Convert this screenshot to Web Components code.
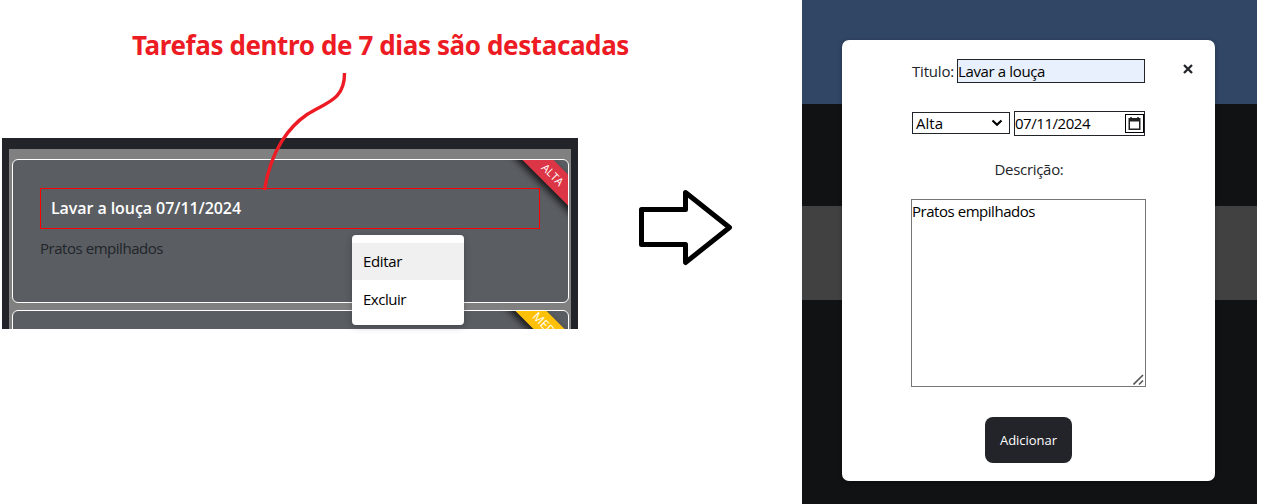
<!DOCTYPE html>
<html lang="pt-BR">
<head>
<meta charset="utf-8">
<title>Tarefas</title>
<style>
body{margin:0;background:#fff;font-family:"Open Sans","Noto Sans",sans-serif;font-size:15px;font-weight:400;line-height:20px;color:#212529}
</style>
</head>
<body>
<task-guide></task-guide>
<script>
function define(name, html, setup){
  const t=document.createElement('template');
  t.innerHTML=html;
  customElements.define(name,class extends HTMLElement{
    connectedCallback(){
      if(this.shadowRoot)return;
      this.attachShadow({mode:'open'}).append(t.content.cloneNode(true));
      if(setup)setup(this);
    }
  });
}

/* A single line of text tracked to a given width */
define('fit-text',`<style>
:host{display:inline-block;white-space:nowrap}
span{display:inline-block}
</style><span><slot></slot></span>`,el=>{
  const s=el.shadowRoot.querySelector('span');
  const w=+el.getAttribute('width'), n=el.textContent.length;
  s.style.letterSpacing=((w-s.getBoundingClientRect().width)/n)+'px';
  el.style.width=w+'px';
});

define('task-ribbon',`<style>
:host{position:absolute;top:3px;right:-64px;width:160px;height:22px;transform:rotate(45deg);background:var(--ribbon);color:#fff;box-shadow:0 4px 7px rgba(0,0,0,.75);font-size:11px;line-height:21px;text-align:center}
</style><slot></slot>`);

define('task-card',`<style>
:host{display:block;position:relative;box-sizing:border-box;height:144px;border:1px solid #fff;border-radius:6px;background:#5a5d62;overflow:hidden;padding:28px 28px 0 27px}
</style><slot></slot><slot name="ribbon"></slot>`);

define('task-heading',`<style>
:host{display:block;box-sizing:border-box;height:41px;border:1px solid #f00;padding:9px 10px;color:#fff;font-weight:600;font-size:16px}
</style><slot></slot>`);

define('context-menu',`<style>
:host{display:block;position:absolute;left:350px;top:97px;box-sizing:border-box;width:112px;height:90px;padding:8px 0;border-radius:4px;background:#fff;color:#000;box-shadow:0 2px 7px rgba(0,0,0,.25)}
div{height:37px;line-height:37px;padding-left:11px}
.on{background:#f0f0f0}
div+div{padding-top:1px}
</style><div class="on"><fit-text width="39">Editar</fit-text></div><div><fit-text width="43">Excluir</fit-text></div>`);

define('task-board',`<style>
:host{display:block;position:relative;margin-left:2px;width:576px;height:191px;box-sizing:border-box;background:#232429;padding:11px 7px 0}
.list{box-sizing:border-box;height:180px;background:#808080;padding:10px 2px 0 3px;display:flex;flex-direction:column;gap:7px;overflow:hidden}
task-card{flex:none}
p{margin:9px 0 0}
.media{top:7px;right:-61px}
</style>
<div class="list">
<task-card><task-heading><fit-text width="190">Lavar a louça 07/11/2024</fit-text></task-heading>
<p><fit-text width="123">Pratos empilhados</fit-text></p>
<task-ribbon slot="ribbon" style="--ribbon:#dc3545;text-indent:2px">ALTA</task-ribbon></task-card>
<task-card><task-ribbon slot="ribbon" class="media" style="--ribbon:#ffc107;font-size:12px;text-indent:-4px">MEDIA</task-ribbon></task-card>
</div><context-menu></context-menu>`);

define('callout-line',`<style>:host{display:block;position:absolute;left:250px;top:68px}svg{display:block}</style>
<svg width="110" height="130" viewBox="250 68 110 130" fill="none" stroke="#ed1c24" stroke-width="3.400"><path d="M344.500 73C345 101 324 103 307 114.500S271 149 264.500 190"/></svg>`);

define('flow-arrow',`<style>:host{display:block;margin:185px 0 0 57px;width:100px}svg{display:block}</style>
<svg width="100" height="84" viewBox="635 185 100 84" fill="none" stroke="#000" stroke-width="5" stroke-linejoin="round"><path d="M641.500 209.500H685.500V192.500L729.500 227.500L685.500 262.500V244.500H641.500Z"/></svg>`);

define('date-field',`<style>
:host{display:flex;box-sizing:border-box;width:131px;height:25px;border:1px solid #212529;justify-content:space-between;align-items:center;color:#000}
fit-text{margin-top:-1px}
i{box-sizing:border-box;width:19px;height:19px;border:1px solid #000;display:flex;align-items:center;justify-content:center}
</style><fit-text width="75">07/11/2024</fit-text><i><svg width="13" height="13" viewBox="0 0 13 13"><path d="M.5 1H12.500V13H.5ZM2 4.500V11.600H11V4.500Z" fill="#222" fill-rule="evenodd"/><path d="M3 0V2M10 0V2" stroke="#222" stroke-width="1.500"/></svg></i>`);

define('select-field',`<style>
:host{display:flex;box-sizing:border-box;width:98px;height:22px;border:1px solid #212529;justify-content:space-between;align-items:center;padding:0 6px 0 3px;color:#000}
</style><fit-text width="27">Alta</fit-text><svg width="12" height="8" viewBox="0 0 12 8"><path d="M1.500 1.500L6 5.700L10.500 1.500" fill="none" stroke="#000" stroke-width="2.200"/></svg>`);

define('text-area',`<style>
:host{display:block;position:relative;box-sizing:border-box;width:235px;height:188px;border:1px solid #767676;color:#000;padding-top:1px}
svg{position:absolute;right:1px;bottom:1px}
</style><fit-text width="123">Pratos empilhados</fit-text><svg width="11" height="11" viewBox="0 0 11 11" stroke="#555" stroke-width="1.600"><path d="M.5 10.500L10 1M6 10.500L10 6.500"/></svg>`);

define('task-dialog',`<style>
:host{display:block;position:relative;box-sizing:border-box;width:373px;height:441px;border-radius:7px;background:#fff;padding:19px 69px 0;box-shadow:0 1px 4px rgba(0,0,0,.3)}
.row{display:flex;margin-left:1px}
.title fit-text{margin-top:2px}
.input{box-sizing:border-box;width:188px;height:24px;border:1px solid #212529;background:#e8f0fe;color:#000;margin-left:3px}
.input fit-text{margin-top:1px}
.opts{margin-top:28px;gap:4px}
select-field{margin-top:1px}
.desc{margin:23px 0 0 1px;text-align:center;height:20px}
text-area{margin-top:20px}
.add{display:flex;align-items:center;justify-content:center;margin:30px 0 0 74px;width:87px;height:46px;border-radius:8px;background:#232429;color:#fff;font-size:13px;font-weight:500}
.close{position:absolute;right:22px;top:24px}
</style>
<div class="row title"><fit-text width="42">Titulo:</fit-text><div class="input"><fit-text width="87">Lavar a louça</fit-text></div></div>
<svg class="close" width="10" height="10" viewBox="0 0 10 10"><path d="M1 1L9 9M9 1L1 9" stroke="#212529" stroke-width="2.300"/></svg>
<div class="row opts"><select-field></select-field><date-field></date-field></div>
<div class="desc"><fit-text width="69">Descrição:</fit-text></div>
<text-area></text-area>
<div class="add"><fit-text width="57">Adicionar</fit-text></div>`);

define('dialog-scene',`<style>
:host{display:block;box-sizing:border-box;margin-left:67px;width:455px;height:504px;padding:40px;background:linear-gradient(#314565 104px,#111214 104px 206px,#414141 206px 300px,#111214 300px)}
</style><task-dialog></task-dialog>`);

define('task-guide',`<style>
:host{display:flex;position:relative;width:1264px;height:504px;overflow:hidden}
.left{width:578px;flex:none}
h1{margin:25px 0 0 132px;height:113px;font:700 26px/40px "Noto Sans","Open Sans",sans-serif;color:#ed1c24;white-space:nowrap}
flow-arrow,dialog-scene{flex:none}
</style>
<div class="left"><h1><fit-text width="497">Tarefas dentro de 7 dias são destacadas</fit-text></h1><task-board></task-board></div>
<flow-arrow></flow-arrow><dialog-scene></dialog-scene><callout-line></callout-line>`);
</script>
</body>
</html>
